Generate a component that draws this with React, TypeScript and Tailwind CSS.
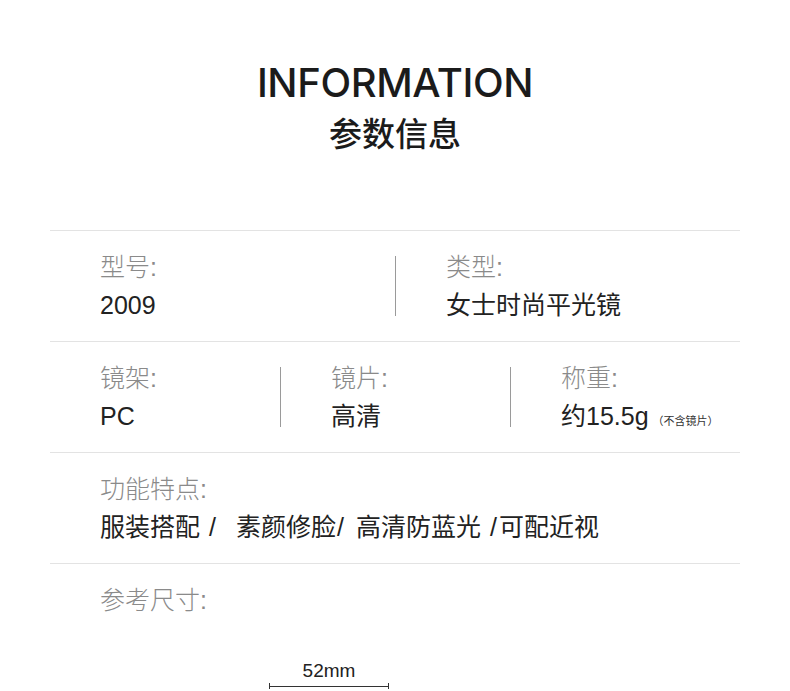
import { ReactNode } from "react";

const font = {
  fontFamily: '"Liberation Sans", "Noto Sans CJK SC", sans-serif',
};

const Cell = ({
  label,
  children,
  divider,
}: {
  label: string;
  children: ReactNode;
  divider?: boolean;
}) => (
  <div className="flex flex-1">
    {divider ? <div className="w-px h-[60px] self-center bg-[#9a9a9a]" /> : null}
    <div className="pl-[50px]">
      <div className="h-[38px] text-[25px] leading-[38px] text-[#8a8a8a] font-light">
        {label}
      </div>
      <div className="h-[38px] text-[25px] leading-[38px] text-[#222] whitespace-nowrap">
        {children}
      </div>
    </div>
  </div>
);

export default function App() {
  return (
    <div className="w-[790px] h-[691px] bg-white overflow-hidden" style={font}>
      {/* heading */}
      <div className="pt-[59px] flex flex-col items-center">
        <h1
          className="text-[40px] leading-[48px] font-medium text-[#1b1b1b] tracking-[-0.4px]"
          style={{ fontFamily: 'Inter, "Liberation Sans", sans-serif' }}
        >
          INFORMATION
        </h1>
        <h2 className="mt-[6px] text-[33px] leading-[44px] font-medium text-[#1b1b1b]">
          参数信息
        </h2>
      </div>

      <div className="mx-[50px] mt-[73px] border-t border-[#e3e3e3]">
        <div className="flex py-[17px] border-b border-[#e3e3e3]">
          <Cell label="型号:">2009</Cell>
          <Cell label="类型:" divider>
            女士时尚平光镜
          </Cell>
        </div>

        <div className="flex py-[17px] border-b border-[#e3e3e3]">
          <Cell label="镜架:">PC</Cell>
          <Cell label="镜片:" divider>
            高清
          </Cell>
          <Cell label="称重:" divider>
            约15.5g
            <span className="ml-[4px] text-[11px] leading-none text-[#333]">（不含镜片）</span>
          </Cell>
        </div>

        <div className="flex py-[17px] border-b border-[#e3e3e3]">
          <Cell label="功能特点:">
            <span>服装搭配</span>
            <span className="ml-[9px]">/</span>
            <span className="ml-[20px]">素颜修脸</span>
            <span className="ml-[1px]">/</span>
            <span className="ml-[12px]">高清防蓝光</span>
            <span className="ml-[9px]">/</span>
            <span className="ml-[2px]">可配近视</span>
          </Cell>
        </div>

        <div className="pt-[17px] pl-[50px]">
          <div className="h-[38px] text-[25px] leading-[38px] text-[#8a8a8a] font-light">
            参考尺寸:
          </div>
        </div>

        {/* measure */}
        <div className="mt-[41px] ml-[219px] w-[120px] flex flex-col items-center">
          <span className="text-[19px] leading-[22px] text-[#222]">52mm</span>
          <div className="mt-[1px] relative w-[120px] h-[6px]">
            <div className="absolute left-0 right-0 top-[3px] h-px bg-[#333]" />
            <div className="absolute left-0 top-0 w-px h-[6px] bg-[#333]" />
            <div className="absolute right-0 top-0 w-px h-[6px] bg-[#333]" />
          </div>
        </div>
      </div>
    </div>
  );
}
